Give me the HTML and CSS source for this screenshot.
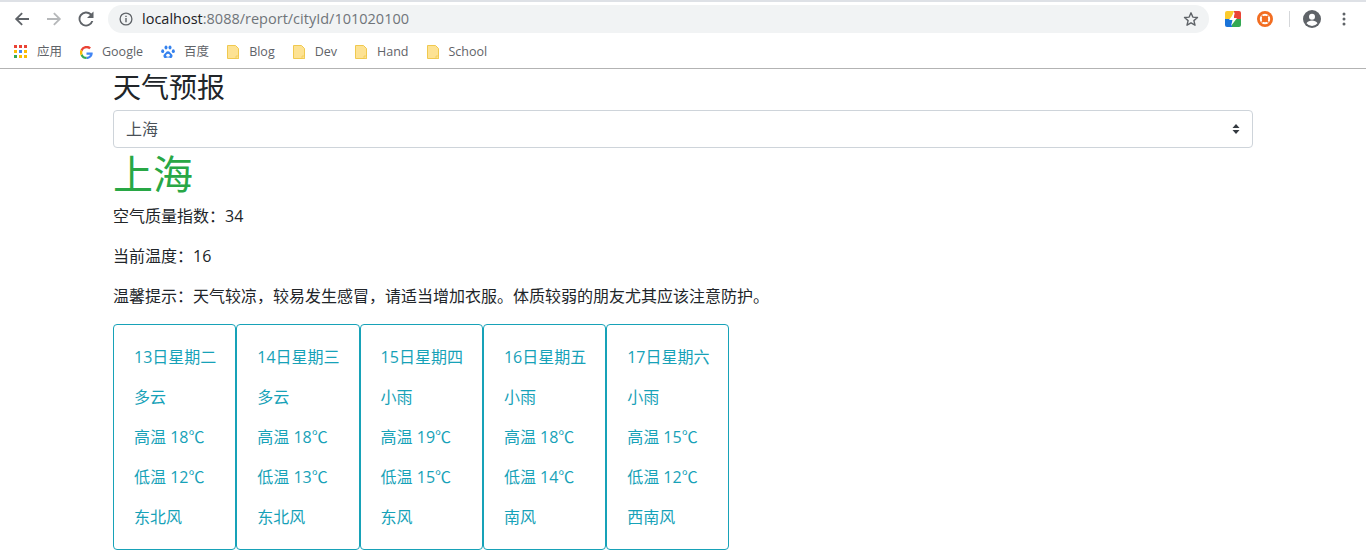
FILE: index.html
```html
<!DOCTYPE html>
<html lang="en">
<head>
    <meta charset="UTF-8">
    <meta name="viewport" content="width=device-width, initial-scale=1.0">
    <title>天气预报</title>
    <link rel="stylesheet" href="styles.css">
</head>
<body>
    <svg class="defs" width="0" height="0">
        <symbol id="folder" viewBox="0 0 12 14">
            <path d="M.5.5h8l3 3v10H.5z" fill="#fde293" stroke="#f0c94f"/>
            <path d="M9 11h2.500v2.500H9z" fill="#fde293" stroke="#f0c94f" stroke-width=".7"/>
        </symbol>
    </svg>
    <header class="browser">
        <div class="toolbar">
            <svg class="nav-icon" viewBox="0 0 16 16"><path d="M15 7H4.500l4.300-4.300L7.500 1.400.9 8l6.600 6.600 1.300-1.300L4.500 9H15z" fill="#5f6368"/></svg>
            <svg class="nav-icon" viewBox="0 0 16 16"><path d="M1 7h10.500L7.200 2.700l1.300-1.300L15.100 8l-6.600 6.600-1.300-1.300L11.500 9H1z" fill="#b6b8ba"/></svg>
            <svg class="nav-icon" viewBox="0 0 16 16"><path d="M13.400 2.600A7.500 7.500 0 1 0 15.300 10h-2a5.600 5.600 0 1 1-1.300-5.900L9 7h6.500V.5z" fill="#5f6368"/></svg>
            <div class="omnibox">
                <svg class="info-icon" viewBox="0 0 14 14"><circle cx="7" cy="7" r="5.900" fill="none" stroke="#5f6368" stroke-width="1.300"/><path d="M6.300 6h1.400v4.200H6.300zM6.300 3.700h1.400v1.400H6.300z" fill="#5f6368"/></svg>
                <span class="url"><span class="url-host">localhost</span>:8088/report/cityId/101020100</span>
                <svg class="star-icon" viewBox="0 0 16 16"><path d="M8 1.800l1.800 4.300 4.700.4-3.600 3.100 1.100 4.600L8 11.800l-4 2.400 1.100-4.600-3.600-3.100 4.700-.4z" fill="none" stroke="#5f6368" stroke-width="1.400" stroke-linejoin="round"/></svg>
            </div>
            <div class="extensions">
                <svg class="ext-icon" viewBox="0 0 16 16">
                    <path d="M2 0h7L6 8H0V2a2 2 0 0 1 2-2z" fill="#fbcb2d"/>
                    <path d="M9 0h5a2 2 0 0 1 2 2v6H9z" fill="#ea4335"/>
                    <path d="M0 8h7v8H2a2 2 0 0 1-2-2z" fill="#1a73d8"/>
                    <path d="M7 8h9v6a2 2 0 0 1-2 2H7z" fill="#34a853"/>
                    <path d="M10 1L4 9h3.500L6 15l6-8H8.500z" fill="#fff"/>
                </svg>
                <svg class="ext-icon ext-orange" viewBox="0 0 16 16">
                    <circle cx="8" cy="8" r="8" fill="#f26d21"/>
                    <circle cx="8" cy="8" r="4.200" fill="none" stroke="#fff" stroke-width="2"/>
                    <path d="M4.500 4.500l1.800 1.800M11.500 4.500L9.700 6.300M4.500 11.500l1.800-1.800M11.500 11.500L9.700 9.700" stroke="#f26d21" stroke-width="1.300"/>
                </svg>
                <div class="toolbar-sep"></div>
                <svg class="avatar-icon" viewBox="0 0 18 18"><circle cx="9" cy="9" r="9" fill="#5f6368"/><circle cx="9" cy="6.800" r="3" fill="#fff"/><path d="M3.500 13.300c1-2 3.500-2.900 5.500-2.900s4.500.9 5.500 2.900A7 7 0 0 1 9 16a7 7 0 0 1-5.500-2.700z" fill="#fff"/></svg>
                <svg class="menu-icon" viewBox="0 0 4 14"><circle cx="2" cy="2" r="1.500" fill="#5f6368"/><circle cx="2" cy="7" r="1.500" fill="#5f6368"/><circle cx="2" cy="12" r="1.500" fill="#5f6368"/></svg>
            </div>
        </div>
        <nav class="bookmarks">
            <a class="bookmark">
                <svg class="bm-icon" viewBox="0 0 14 14">
                    <path d="M0 0h3v3H0z" fill="#ea4335"/><path d="M5 0h3v3H5z" fill="#ea4335"/><path d="M10 0h3v3h-3z" fill="#ea4335"/>
                    <path d="M0 5h3v3H0z" fill="#fbbc04"/><path d="M5 5h3v3H5z" fill="#4285f4"/><path d="M10 5h3v3h-3z" fill="#fbbc04"/>
                    <path d="M0 10h3v3H0z" fill="#34a853"/><path d="M5 10h3v3H5z" fill="#fbbc04"/><path d="M10 10h3v3h-3z" fill="#fbbc04"/>
                </svg>
                应用
            </a>
            <a class="bookmark">
                <svg class="bm-icon bm-google" viewBox="0 0 14 14">
                    <path d="M13.500 7H7v2.400h3.700c-.4 1.400-1.700 2.300-3.700 2.300V14c3.900 0 6.700-2.700 6.700-6.500z" fill="#4285f4"/>
                    <path d="M7 11.700A4.500 4.500 0 0 1 2.700 8.600L.7 10.200A7 7 0 0 0 7 14z" fill="#34a853"/>
                    <path d="M2.700 8.600a4.700 4.700 0 0 1 0-3L.7 3.900a7 7 0 0 0 0 6.300z" fill="#fbbc04"/>
                    <path d="M7 2.300c1.200 0 2.200.4 3 1.200l1.800-1.800A7 7 0 0 0 .7 3.900l2 1.700A4.500 4.500 0 0 1 7 2.300z" fill="#ea4335"/>
                </svg>
                Google
            </a>
            <a class="bookmark">
                <svg class="bm-icon" viewBox="0 0 14 14" fill="#3582ee">
                    <ellipse cx="1.700" cy="6.200" rx="1.500" ry="1.900"/><ellipse cx="5" cy="2.400" rx="1.500" ry="2"/>
                    <ellipse cx="9" cy="2.400" rx="1.500" ry="2"/><ellipse cx="12.300" cy="6.200" rx="1.500" ry="1.900"/>
                    <path d="M7 6.200c2 0 2.400 2 3.800 3 1.500 1.200.6 4-1.500 3.800-1 0-1.500-.4-2.300-.4s-1.300.4-2.300.4c-2.100.2-3-2.600-1.500-3.800 1.400-1 1.800-3 3.800-3z"/>
                    <ellipse cx="7" cy="10.200" rx="1.800" ry="1.500" fill="#fff"/>
                </svg>
                百度
            </a>
            <a class="bookmark"><svg class="bm-folder"><use href="#folder"/></svg>Blog</a>
            <a class="bookmark"><svg class="bm-folder"><use href="#folder"/></svg>Dev</a>
            <a class="bookmark"><svg class="bm-folder"><use href="#folder"/></svg>Hand</a>
            <a class="bookmark"><svg class="bm-folder"><use href="#folder"/></svg>School</a>
        </nav>
    </header>

    <div class="container">
        <h3 class="page-title">天气预报</h3>
        <div class="city-select">
            <span>上海</span>
            <svg class="select-arrows" viewBox="0 0 8 10"><path d="M4 0l3.500 4h-7zM4 10L.5 6h7z" fill="#343a40"/></svg>
        </div>
        <h1 class="city-name">上海</h1>
        <p>空气质量指数：34</p>
        <p>当前温度：16</p>
        <p>温馨提示：天气较凉，较易发生感冒，请适当增加衣服。体质较弱的朋友尤其应该注意防护。</p>
        <div class="forecast">
            <div class="card">
                <p>13日星期二</p>
                <p>多云</p>
                <p>高温 18℃</p>
                <p>低温 12℃</p>
                <p>东北风</p>
            </div>
            <div class="card">
                <p>14日星期三</p>
                <p>多云</p>
                <p>高温 18℃</p>
                <p>低温 13℃</p>
                <p>东北风</p>
            </div>
            <div class="card">
                <p>15日星期四</p>
                <p>小雨</p>
                <p>高温 19℃</p>
                <p>低温 15℃</p>
                <p>东风</p>
            </div>
            <div class="card">
                <p>16日星期五</p>
                <p>小雨</p>
                <p>高温 18℃</p>
                <p>低温 14℃</p>
                <p>南风</p>
            </div>
            <div class="card">
                <p>17日星期六</p>
                <p>小雨</p>
                <p>高温 15℃</p>
                <p>低温 12℃</p>
                <p>西南风</p>
            </div>
        </div>
    </div>
</body>
</html>
```

FILE: styles.css
```css
* {
    box-sizing: border-box;
}
html, body {
    height: 100%;
}
body {
    font-family: "Open Sans", "Noto Sans CJK SC", sans-serif;
    font-size: 16px;
    line-height: 1.5;
    color: #212529;
    margin: 0;
    padding: 0;
    background-color: #fff;
    overflow: hidden;
}
.defs {
    display: block;
    height: 0;
}

/* browser chrome */
.browser {
    height: 69px;
    border-top: 2px solid #dee1e6;
    border-bottom: 1px solid #b3b3b3;
    background-color: #fff;
}
.toolbar {
    display: flex;
    align-items: center;
    height: 34px;
    padding: 3px 0 3px 14px;
}
.nav-icon {
    width: 16px;
    height: 16px;
    margin-right: 16px;
    flex: none;
}
.omnibox {
    display: flex;
    align-items: center;
    width: 1101px;
    height: 28px;
    margin-left: -2px;
    padding: 0 10px 0 11px;
    background-color: #f1f3f4;
    border-radius: 14px;
}
.info-icon {
    width: 14px;
    height: 14px;
    margin-right: 9px;
}
.url {
    flex: 1;
    font-size: 14.5px;
    line-height: 20px;
    color: #70757a;
}
.url-host {
    color: #202124;
}
.star-icon {
    width: 16px;
    height: 16px;
}
.extensions {
    display: flex;
    align-items: center;
    margin-left: 16px;
}
.ext-icon {
    width: 16px;
    height: 16px;
}
.ext-orange {
    margin-left: 16px;
}
.toolbar-sep {
    width: 1px;
    height: 16px;
    margin: 0 14px 0 16px;
    background-color: #d5d7da;
}
.avatar-icon {
    width: 18px;
    height: 18px;
    margin-left: -1px;
}
.menu-icon {
    width: 4px;
    height: 14px;
    margin-left: 21px;
}
.bookmarks {
    display: flex;
    align-items: center;
    height: 32px;
    padding: 0 0 0 14px;
    gap: 18px;
    font-size: 12.5px;
    color: #5f6368;
}
.bookmark {
    display: flex;
    align-items: center;
    gap: 9px;
}
.bm-icon {
    width: 14px;
    height: 14px;
}
.bm-google {
    width: 13px;
    height: 13px;
}
.bm-folder {
    width: 12px;
    height: 14px;
    margin-right: 1px;
}

/* page */
.container {
    width: 1140px;
    margin: 0 auto;
}
.page-title {
    font-size: 28px;
    font-weight: 400;
    line-height: 1.2;
    padding-top: 2px;
    margin: 0 0 5px;
}
.city-select {
    display: flex;
    align-items: center;
    justify-content: space-between;
    height: 38px;
    padding: 0 12px;
    color: #495057;
    border: 1px solid #ced4da;
    border-radius: 4px;
}
.select-arrows {
    width: 8px;
    height: 10px;
}
.city-name {
    font-size: 40px;
    font-weight: 400;
    line-height: 1.2;
    color: #28a745;
    padding-top: 2px;
    margin: 0 0 6px;
}
p {
    margin: 0 0 16px;
}
.forecast {
    display: flex;
}
.card {
    flex: none;
    width: 123.3px;
    padding: 20px;
    border: 1px solid #17a2b8;
    border-radius: 4px;
    color: #17a2b8;
}
.card p {
    white-space: nowrap;
}
.card p:last-child {
    margin-bottom: 0;
}
```
